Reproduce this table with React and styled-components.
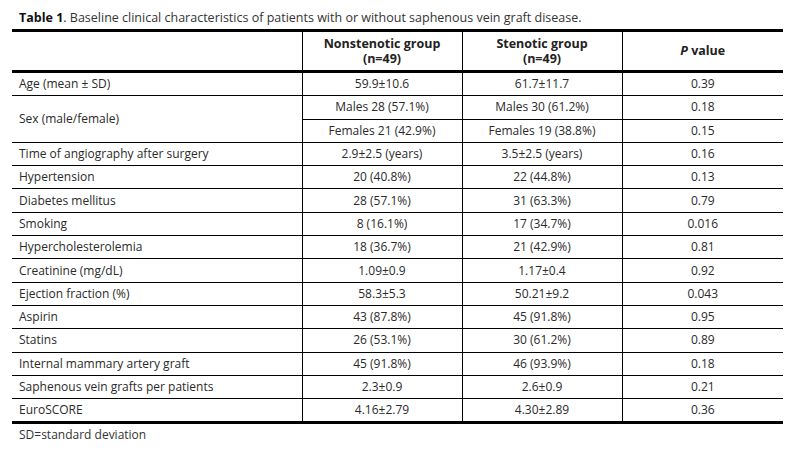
import React from "react";
import styled, { createGlobalStyle } from "styled-components";

const rows = [
  { label: "Age (mean ± SD)", a: "59.9±10.6", b: "61.7±11.7", p: "0.39" },
  {
    label: "Sex (male/female)",
    split: [
      { a: "Males 28 (57.1%)", b: "Males 30 (61.2%)", p: "0.18" },
      { a: "Females 21 (42.9%)", b: "Females 19 (38.8%)", p: "0.15" },
    ],
  },
  { label: "Time of angiography after surgery", a: "2.9±2.5 (years)", b: "3.5±2.5 (years)", p: "0.16" },
  { label: "Hypertension", a: "20 (40.8%)", b: "22 (44.8%)", p: "0.13" },
  { label: "Diabetes mellitus", a: "28 (57.1%)", b: "31 (63.3%)", p: "0.79" },
  { label: "Smoking", a: "8 (16.1%)", b: "17 (34.7%)", p: "0.016" },
  { label: "Hypercholesterolemia", a: "18 (36.7%)", b: "21 (42.9%)", p: "0.81" },
  { label: "Creatinine (mg/dL)", a: "1.09±0.9", b: "1.17±0.4", p: "0.92" },
  { label: "Ejection fraction (%)", a: "58.3±5.3", b: "50.21±9.2", p: "0.043" },
  { label: "Aspirin", a: "43 (87.8%)", b: "45 (91.8%)", p: "0.95" },
  { label: "Statins", a: "26 (53.1%)", b: "30 (61.2%)", p: "0.89" },
  { label: "Internal mammary artery graft", a: "45 (91.8%)", b: "46 (93.9%)", p: "0.18" },
  { label: "Saphenous vein grafts per patients", a: "2.3±0.9", b: "2.6±0.9", p: "0.21" },
  { label: "EuroSCORE", a: "4.16±2.79", b: "4.30±2.89", p: "0.36" },
];

export default function App() {
  return (
    <>
      <GlobalStyle />
      <Page>
        <Caption>
          <b>Table 1</b>. Baseline clinical characteristics of patients with or without saphenous vein graft disease.
        </Caption>
        <Table>
          <colgroup>
            <col style={{ width: 290 }} />
            <col style={{ width: 160 }} />
            <col style={{ width: 160 }} />
            <col style={{ width: 161 }} />
          </colgroup>
          <thead>
            <tr>
              <Head />
              <Head>
                <HeadLine>Nonstenotic group</HeadLine>
                <HeadLine>(n=49)</HeadLine>
              </Head>
              <Head>
                <HeadLine>Stenotic group</HeadLine>
                <HeadLine>(n=49)</HeadLine>
              </Head>
              <Head>
                <HeadLine><i>P</i> value</HeadLine>
              </Head>
            </tr>
          </thead>
          <tbody>
            {rows.map((r) =>
              r.split ? (
                <React.Fragment key={r.label}>
                  <tr>
                    <Label rowSpan={2}>{r.label}</Label>
                    <Cell>{r.split[0].a}</Cell>
                    <Cell>{r.split[0].b}</Cell>
                    <Cell>{r.split[0].p}</Cell>
                  </tr>
                  <tr>
                    <Cell>{r.split[1].a}</Cell>
                    <Cell>{r.split[1].b}</Cell>
                    <Cell>{r.split[1].p}</Cell>
                  </tr>
                </React.Fragment>
              ) : (
                <tr key={r.label}>
                  <Label>{r.label}</Label>
                  <Cell>{r.a}</Cell>
                  <Cell>{r.b}</Cell>
                  <Cell>{r.p}</Cell>
                </tr>
              )
            )}
          </tbody>
        </Table>
        <Note>SD=standard deviation</Note>
      </Page>
    </>
  );
}

const GlobalStyle = createGlobalStyle`
  body {
    margin: 0;
    background: #fff;
    font-family: "Open Sans", "Noto Sans", sans-serif;
    color: #222;
  }
`;

const Page = styled.div`
  width: 804px;
  height: 450px;
  padding: 10px 0 0 12px;
  box-sizing: border-box;
`;

const Caption = styled.div`
  font-size: 12.5px;
  line-height: 16px;
  color: #333;
  padding-left: 7px;
  margin-bottom: 3px;

  b {
    font-weight: 700;
    color: #111;
  }
`;

const Table = styled.table`
  width: 771px;
  border-collapse: collapse;
  table-layout: fixed;
  border-top: 3px solid #000;
  border-bottom: 3px solid #000;
  font-size: 12px;
  color: #2a2a2a;
`;

const Head = styled.th`
  height: 38px;
  padding: 0;
  font-weight: 700;
  font-size: 12.5px;
  color: #222;
  text-align: center;
  vertical-align: middle;
  border-bottom: 3px solid #000;
  border-left: 1px solid #000;

  &:first-child {
    border-left: none;
  }
`;

const HeadLine = styled.div`
  line-height: 15.5px;
  white-space: nowrap;
`;

const Cell = styled.td`
  height: 22.3px;
  padding: 0;
  text-align: center;
  vertical-align: middle;
  border-top: 1px solid #000;
  border-left: 1px solid #000;
  line-height: 16px;
`;

const Label = styled(Cell)`
  text-align: left;
  padding-left: 7px;
  border-left: none;
`;

const Note = styled.div`
  font-size: 12px;
  line-height: 16px;
  color: #333;
  padding: 3px 0 0 7px;
`;
